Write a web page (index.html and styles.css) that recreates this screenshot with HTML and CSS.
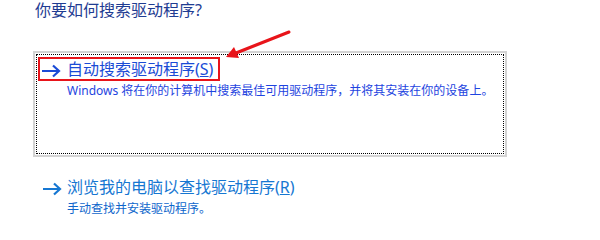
FILE: index.html
```html
<!DOCTYPE html>
<html lang="zh-CN">
<head>
<meta charset="utf-8">
<link rel="stylesheet" href="styles.css">
</head>
<body>
<div class="page">
  <h1 class="title">你要如何搜索驱动程序?</h1>
  <div class="choice-frame">
    <div class="choice-focus">
      <div class="link-row highlighted">
        <svg class="arrow" viewBox="0 0 20 14" width="20" height="14"><path d="M1 7 H18 M12 1.5 L18 7 L12 12.5" fill="none" stroke="currentColor" stroke-width="2.2"/></svg>
        <span class="link-text">自动搜索驱动程序(<u>S</u>)</span>
      </div>
      <div class="desc">Windows 将在你的计算机中搜索最佳可用驱动程序，并将其安装在你的设备上。</div>
    </div>
  </div>
  <div class="choice-plain">
    <div class="link-row plain">
      <svg class="arrow" viewBox="0 0 20 14" width="20" height="14"><path d="M1 7 H18 M12 1.5 L18 7 L12 12.5" fill="none" stroke="currentColor" stroke-width="2.2"/></svg>
      <span class="link-text">浏览我的电脑以查找驱动程序(<u>R</u>)</span>
    </div>
    <div class="desc plain-desc">手动查找并安装驱动程序。</div>
  </div>
  <svg class="annotation" width="600" height="224" viewBox="0 0 600 224">
    <line x1="289" y1="32" x2="236" y2="53" stroke="#e8141a" stroke-width="3" stroke-linecap="round"/>
    <polygon points="226,57 239,58 234,47" fill="#e8141a"/>
  </svg>
</div>
</body>
</html>
```

FILE: styles.css
```css
html, body {
  margin: 0;
  padding: 0;
  background: #ffffff;
}

body {
  width: 600px;
  height: 224px;
  overflow: hidden;
  font-family: "Noto Sans", "Noto Sans CJK SC", sans-serif;
}

.page {
  position: relative;
  width: 600px;
  height: 224px;
}

.title {
  margin: 0;
  padding-left: 35px;
  font-size: 16px;
  line-height: 20px;
  font-weight: normal;
  color: #1f3c92;
}

.choice-frame {
  margin: 31px 0 0 33px;
  width: 470px;
  height: 102px;
  border: 2px solid #d3d3d3;
  padding: 0;
}

.choice-focus {
  margin: 1px;
  height: 98px;
  border: 1px dotted #000000;
}

.link-row {
  display: inline-flex;
  align-items: center;
  font-size: 16px;
  line-height: 20px;
}

.highlighted {
  margin: 2px 0 0 1px;
  padding: 0 5px 0 1px;
  border: 2px solid #e8141a;
  color: #1a4bd6;
}

.arrow {
  flex: none;
  margin-right: 6px;
  margin-top: 3px;
}

.desc {
  margin-left: 30px;
  font-size: 12px;
  line-height: 16px;
  color: #1e44e0;
}

.choice-plain {
  margin: 20px 0 0 42px;
}

.plain {
  color: #1677d2;
}

.plain .arrow {
  margin-right: 5px;
}

.plain-desc {
  margin-left: 25px;
  color: #0e66cc;
}

.annotation {
  position: absolute;
  left: 0;
  top: 0;
  pointer-events: none;
}
```
